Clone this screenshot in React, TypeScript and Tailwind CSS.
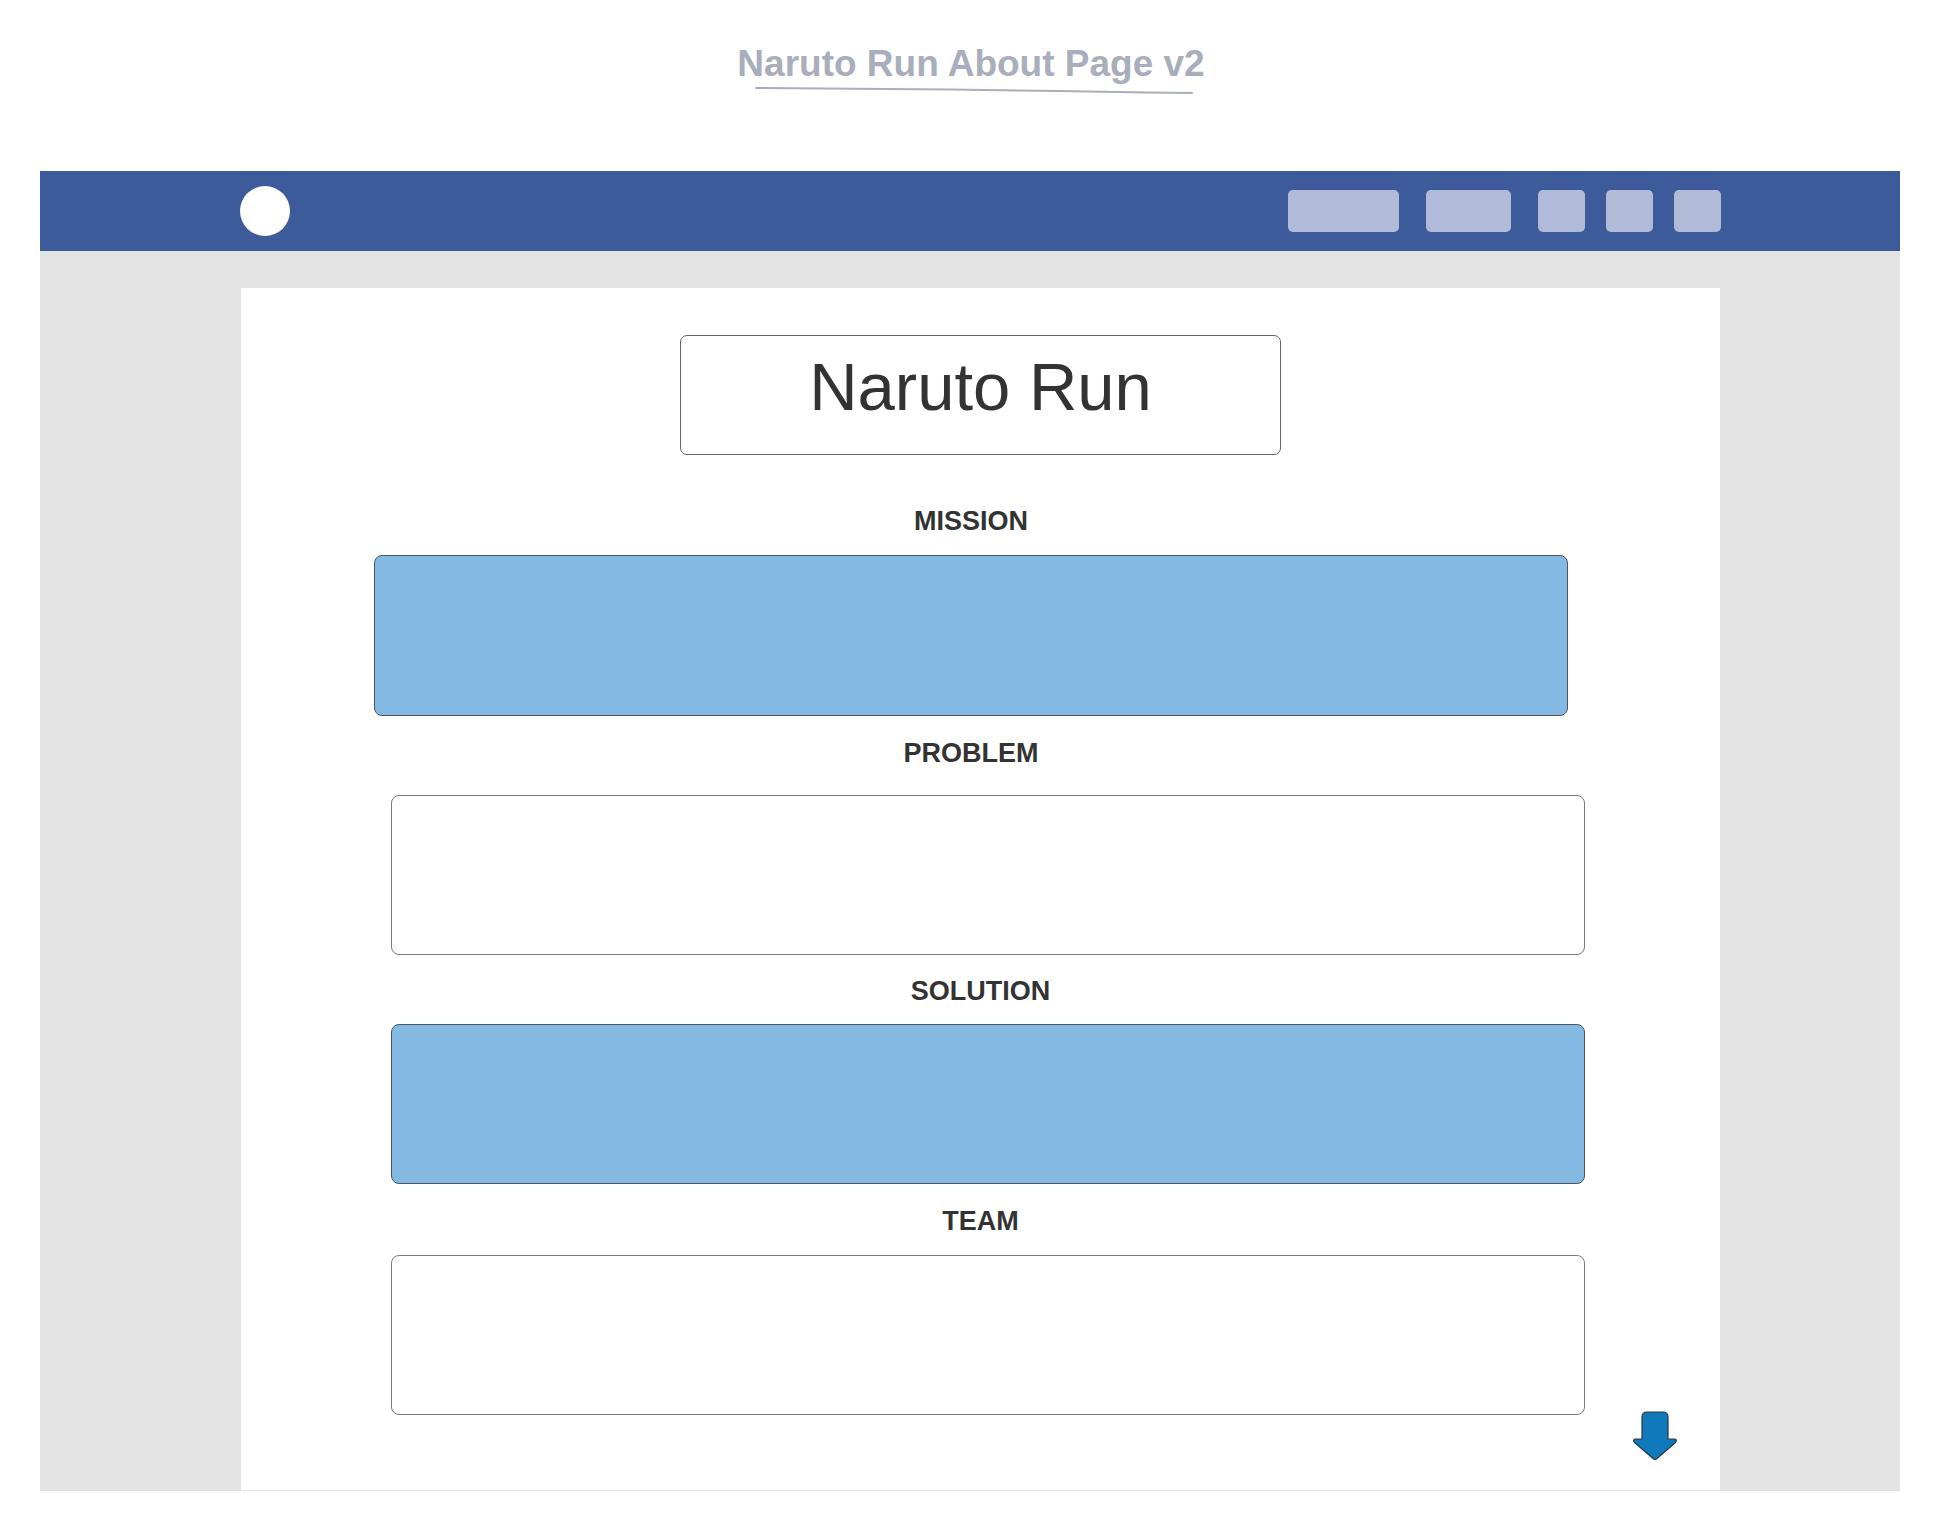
const font = { fontFamily: '"Liberation Sans", Arial, sans-serif' };

function SectionLabel({ text, shift }: { text: string; shift?: boolean }) {
  return (
    <div className={`flex justify-center ${shift ? "pr-[19px]" : ""}`}>
      <span className="text-[27px] leading-none font-bold text-[#333333]">{text}</span>
    </div>
  );
}

function DownArrow() {
  return (
    <svg width="46" height="50" viewBox="0 0 46 50" className="shrink-0">
      <path
        d="M10 6 Q10 1 15 1 L31 1 Q36 1 36 6 L36 28 L43 28 Q45.5 29 43.5 31.5 L25 47.5 Q23 49.2 21 47.5 L2.5 31.5 Q0.5 29 3 28 L10 28 Z"
        fill="#0f79bc"
        stroke="#2c3640"
        strokeWidth="1.2"
        strokeLinejoin="round"
      />
    </svg>
  );
}

export default function App() {
  return (
    <div className="min-h-[1532px] w-[1940px] bg-white" style={font}>
      {/* page title */}
      <div className="pt-[45px] flex flex-col items-center pl-[2px]">
        <h1 className="text-[37px] leading-none font-bold text-[#a8aebb]">Naruto Run About Page v2</h1>
        <svg width="442" height="10" viewBox="0 0 442 10" className="mt-[4px] ml-[8px]">
          <path d="M2 2 Q200 3 438 7" stroke="#a8aebb" strokeWidth="2" fill="none" strokeLinecap="round" />
        </svg>
      </div>

      <div className="mx-[40px] mt-[75px]">
        {/* nav bar */}
        <div className="h-[80px] bg-[#3d5a9b] flex items-center justify-between pl-[200px] pr-[179px]">
          <div className="size-[50px] rounded-full bg-white" />
          <div className="flex items-center">
            <div className="w-[111px] h-[42px] rounded-[5px] bg-[#b0bcd7]" />
            <div className="w-[85px] h-[42px] rounded-[5px] bg-[#b0bcd7] ml-[27px]" />
            <div className="w-[47px] h-[42px] rounded-[5px] bg-[#b0bcd7] ml-[27px]" />
            <div className="w-[47px] h-[42px] rounded-[5px] bg-[#b0bcd7] ml-[21px]" />
            <div className="w-[47px] h-[42px] rounded-[5px] bg-[#b0bcd7] ml-[21px]" />
          </div>
        </div>

        {/* gray canvas */}
        <div className="bg-[#e3e3e3] pt-[37px] pb-[1px] pl-[201px] pr-[180px]">
          <div className="bg-white h-[1202px] flex flex-col">
            <div className="mt-[47px] self-center w-[601px] h-[120px] border border-[#666666] rounded-[7px] flex justify-center pt-[17px]">
              <span className="text-[67px] leading-none text-[#333333]">Naruto Run</span>
            </div>

            <div className="mt-[53px]">
              <SectionLabel text="MISSION" shift />
            </div>
            <div className="mt-[20px] ml-[133px] w-[1194px] h-[161px] rounded-[8px] border border-[#4f5559] bg-[#84b9e3]" />

            <div className="mt-[24px]">
              <SectionLabel text="PROBLEM" shift />
            </div>
            <div className="mt-[28px] ml-[150px] w-[1194px] h-[160px] rounded-[8px] border border-[#7a7a7a] bg-white" />

            <div className="mt-[23px]">
              <SectionLabel text="SOLUTION" />
            </div>
            <div className="mt-[19px] ml-[150px] w-[1194px] h-[160px] rounded-[8px] border border-[#4f5559] bg-[#84b9e3]" />

            <div className="mt-[24px]">
              <SectionLabel text="TEAM" />
            </div>
            <div className="mt-[20px] ml-[150px] flex items-start">
              <div className="w-[1194px] h-[160px] rounded-[8px] border border-[#7a7a7a] bg-white" />
              <div className="ml-[47px] mt-[156px]">
                <DownArrow />
              </div>
            </div>
          </div>
        </div>
      </div>
    </div>
  );
}
